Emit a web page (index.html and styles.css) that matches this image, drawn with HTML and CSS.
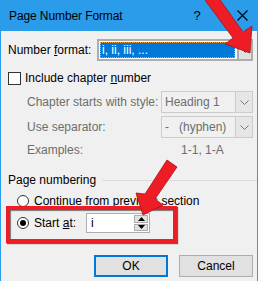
FILE: index.html
```html
<!DOCTYPE html>
<html>
<head>
<meta charset="utf-8">
<link rel="stylesheet" href="styles.css">
</head>
<body>
<div class="window">
  <div class="titlebar">
    <span class="title">Page Number Format</span>
    <span class="help">?</span>
    <span class="close"><svg width="11" height="11" viewBox="0 0 11 11"><path d="M0.5 0.5L10.5 10.5M10.5 0.5L0.5 10.5" stroke="#000" stroke-width="1.1" fill="none"/></svg></span>
  </div>
  <div class="content">
    <div class="row row-format">
      <span class="label">Number <u>f</u>ormat:</span>
      <div class="combo combo-wide">
        <div class="combo-value"><span class="selection">i, ii, iii, ...</span></div>
        <div class="combo-btn"><svg width="9" height="5" viewBox="0 0 9 5"><path d="M0.5 0.5L4.5 4.5L8.5 0.5" stroke="#555" stroke-width="1" fill="none"/></svg></div>
      </div>
    </div>
    <div class="row row-check">
      <span class="checkbox"></span>
      <span class="label">Include chapter <u>n</u>umber</span>
    </div>
    <div class="row row-sub row-chapter">
      <span class="label muted">Chapter starts with style:</span>
      <div class="combo combo-disabled">
        <div class="combo-value">Heading 1</div>
        <div class="combo-btn"><svg width="9" height="5" viewBox="0 0 9 5"><path d="M0.5 0.5L4.5 4.5L8.5 0.5" stroke="#777" stroke-width="1" fill="none"/></svg></div>
      </div>
    </div>
    <div class="row row-sub row-sep">
      <span class="label muted">Use separator:</span>
      <div class="combo combo-disabled">
        <div class="combo-value">-&nbsp;&nbsp;&nbsp;(hyphen)</div>
        <div class="combo-btn"><svg width="9" height="5" viewBox="0 0 9 5"><path d="M0.5 0.5L4.5 4.5L8.5 0.5" stroke="#777" stroke-width="1" fill="none"/></svg></div>
      </div>
    </div>
    <div class="row row-sub row-examples">
      <span class="label muted">Examples:</span>
      <span class="label muted examples-value">1-1, 1-A</span>
    </div>
    <div class="row row-group">
      <span class="label">Page numbering</span>
      <span class="group-line"></span>
    </div>
    <div class="row row-radio row-continue">
      <span class="radio"></span>
      <span class="label">Continue from previous section</span>
    </div>
    <div class="row row-radio row-start">
      <span class="radio checked"></span>
      <span class="label start-label">Start <u>a</u>t:</span>
      <div class="spin">
        <div class="spin-value">i</div>
        <div class="spin-btns">
          <div class="spin-btn"><svg width="7" height="4" viewBox="0 0 7 4"><path d="M0 4L3.5 0L7 4Z" fill="#000"/></svg></div>
          <div class="spin-btn"><svg width="7" height="4" viewBox="0 0 7 4"><path d="M0 0L7 0L3.5 4Z" fill="#000"/></svg></div>
        </div>
      </div>
    </div>
    <div class="row row-buttons">
      <div class="btn btn-default">OK</div>
      <div class="btn">Cancel</div>
    </div>
  </div>
  <div class="highlight-box"></div>
  <svg class="annotations" width="261" height="281" viewBox="0 0 261 281">
    <g fill="#ee1c24" stroke="#a0141a" stroke-width="0.8" stroke-linejoin="round">
      <path d="M202 -4 L213 -10 L243 32 L252 26 L250 53 L225 44 L233 38 Z"/>
      <path d="M167 160 L177 167 L155 199 L163 205 L143 215 L136 193 L145 194 Z"/>
    </g>
  </svg>
</div>
</body>
</html>
```
FILE: styles.css
```css
* { box-sizing: border-box; }
html, body {
  margin: 0;
  padding: 0;
  background: #fbfbfb;
  font-family: "Liberation Sans", Arial, sans-serif;
  font-size: 12px;
  color: #000;
}
.window {
  position: relative;
  width: 258px;
  height: 281px;
  background: #f0f0f0;
  border-left: 1px solid #2b9cea;
  border-right: 1px solid #2b9cea;
  overflow: hidden;
}
.titlebar {
  height: 31px;
  background: #2b9cea;
  display: flex;
  align-items: center;
  padding-left: 9px;
  margin: 0 -1px;
}
.title { font-size: 12px; letter-spacing: -0.1px; }
.help { margin-left: 71px; font-size: 13px; }
.close { margin-left: 36px; display: flex; }
.content {
  padding: 0 4px 0 7px;
  display: flex;
  flex-direction: column;
}
.row {
  display: flex;
  align-items: center;
  white-space: nowrap;
}
.label u { text-decoration: underline; text-underline-offset: 1px; }
.muted { color: #6d6d6d; }
.row-format { height: 22px; margin-top: 8px; }
.combo {
  display: flex;
  margin-left: auto;
  height: 100%;
}
.combo-wide {
  width: 156px;
  border: 2px solid #adadad;
  background: #fff;
  padding: 1px 1px 1px 1px;
}
.combo-wide .combo-value {
  flex: 1;
  background: #0078d7;
  outline: 1px dotted #f0a040;
  outline-offset: -1px;
  display: flex;
  align-items: center;
  padding-left: 2px;
  color: #fff;
}
.combo-wide .combo-btn {
  width: 16px;
  margin: -3px -3px -3px 2px;
  background: #e1e1e1;
  border: 2px solid #adadad;
  display: flex;
  align-items: center;
  justify-content: center;
}
.row-check { height: 16px; margin-top: 9px; }
.checkbox {
  width: 13px;
  height: 13px;
  border: 1px solid #333;
  background: #fff;
  margin-right: 4px;
}
.row-sub { padding-left: 19px; }
.row-chapter { height: 22px; margin-top: 5px; }
.row-sep { height: 22px; margin-top: 3px; }
.combo-disabled {
  width: 92px;
  border: 1px solid #cccccc;
  background: #f0f0f0;
  color: #6d6d6d;
}
.combo-disabled .combo-value {
  flex: 1;
  display: flex;
  align-items: center;
  padding-left: 3px;
}
.combo-disabled .combo-btn {
  width: 17px;
  background: #e6e6e6;
  border-left: 1px solid #cccccc;
  display: flex;
  align-items: center;
  justify-content: center;
}
.row-examples { height: 16px; margin-top: 4px; }
.examples-value { margin-left: 98px; }
.row-group { height: 16px; margin-top: 14px; }
.group-line {
  flex: 1;
  height: 1px;
  background: #dcdcdc;
  margin-left: 6px;
  margin-right: -4px;
}
.row-radio { padding-left: 9px; }
.radio {
  width: 12px;
  height: 12px;
  border: 1px solid #333;
  border-radius: 50%;
  background: #fff;
  margin-right: 5px;
  display: flex;
  align-items: center;
  justify-content: center;
}
.radio.checked::after {
  content: "";
  width: 6px;
  height: 6px;
  border-radius: 50%;
  background: #000;
}
.row-continue { height: 16px; margin-top: 5px; }
.row-start { height: 20px; margin-top: 4px; }
.start-label { width: 52px; }
.spin {
  width: 64px;
  height: 20px;
  border: 1px solid #adadad;
  background: #fff;
  display: flex;
}
.spin-value { flex: 1; padding-left: 4px; display: flex; align-items: center; }
.spin-btns {
  width: 16px;
  display: flex;
  flex-direction: column;
  padding: 1px;
  gap: 1px;
}
.spin-btn {
  flex: 1;
  background: #e1e1e1;
  border: 1px solid #adadad;
  display: flex;
  align-items: center;
  justify-content: center;
}
.row-buttons { margin-top: 22px; justify-content: flex-end; gap: 11px; }
.btn {
  width: 74px;
  height: 22px;
  background: #e1e1e1;
  border: 1px solid #adadad;
  display: flex;
  align-items: center;
  justify-content: center;
}
.btn-default { border: 2px solid #0078d7; }
.highlight-box {
  position: absolute;
  left: 5px;
  top: 206px;
  width: 171px;
  height: 37px;
  border: 4px solid #ee1c24;
  box-shadow: 1px 1px 1px rgba(0,0,0,0.6), inset 1px 1px 1px rgba(0,0,0,0.5);
}
.annotations {
  position: absolute;
  left: -1px;
  top: 0;
}
```
